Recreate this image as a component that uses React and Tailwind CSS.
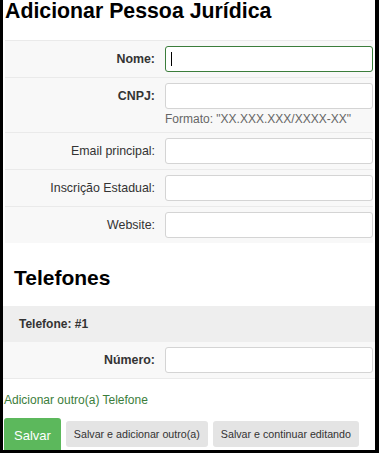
import React from 'react';

const font = { fontFamily: '"Liberation Sans", Arial, sans-serif' };

function Row({ label, required, help, focused, last }) {
  return (
    <div className={`flex items-start py-[5px] ${last ? '' : 'border-b border-[#eaeaea]'}`}>
      <div className={`w-[150px] h-[26px] flex items-center justify-end text-[12.4px] text-[#333] ${required ? 'font-bold' : ''}`}>
        {label}
      </div>
      <div className="ml-[10px] flex-1 flex flex-col">
        {focused ? (
          <div className="h-[26px] rounded-[3px] border border-[#3b7d3b] bg-white flex items-center pl-[5px]">
            <span className="w-px h-[14px] bg-black" />
            <input className="flex-1 outline-none border-0 bg-transparent text-[12px]" />
          </div>
        ) : (
          <input className="h-[26px] rounded-[3px] border border-[#d4d4d4] bg-white outline-none text-[12px] px-[5px]" />
        )}
        {help && (
          <div className="mt-[3px] leading-[14px] text-[12px] text-[#666] mb-[1px]">{help}</div>
        )}
      </div>
    </div>
  );
}

export default function App() {
  return (
    <div className="w-[379px] h-[453px] bg-black pl-[3px] pr-[4px] pb-[3px] overflow-hidden" style={font}>
      <div className="h-full bg-white overflow-hidden">
        <h1 className="h-[40px] pl-[2px] pt-[1px] text-[21.3px] leading-[20px] font-bold text-black">
          Adicionar Pessoa Jurídica
        </h1>

        <div className="ml-[2px] mr-[2px] bg-[#f8f8f8] border-t border-[#eaeaea]">
          <Row label="Nome:" required focused />
          <Row label="CNPJ:" required help={'Formato: "XX.XXX.XXX/XXXX-XX"'} />
          <Row label="Email principal:" />
          <Row label="Inscrição Estadual:" />
          <Row label="Website:" last />
        </div>

        <h2 className="mt-[25px] pl-[11px] text-[21px] leading-[20px] font-bold text-black">Telefones</h2>

        <div className="mt-[18px] mr-[-1px]">
          <div className="h-[36px] bg-[#eeeeee] flex items-center pl-[16px] text-[12px] font-bold text-[#333]">
            Telefone: #1
          </div>
          <div className="bg-[#f8f8f8] border-b border-[#eaeaea] pl-[2px] pr-[3px]">
            <Row label="Número:" required last />
          </div>
        </div>

        <div className="mt-[14px] pl-[1px] text-[12px] leading-[14px] text-[#3b7d3b]">
          Adicionar outro(a) Telefone
        </div>

        <div className="mt-[11px] pl-[1px] flex items-start gap-[5px]">
          <button className="h-[35px] px-[10px] rounded-[3px] bg-[#5cb85c] text-white text-[13px]">Salvar</button>
          <button className="mt-[3px] h-[26px] px-[8px] rounded-[3px] bg-[#e4e4e4] text-[#333] text-[10.7px]">
            Salvar e adicionar outro(a)
          </button>
          <button className="mt-[3px] h-[26px] px-[8px] rounded-[3px] bg-[#e4e4e4] text-[#333] text-[10.7px]">
            Salvar e continuar editando
          </button>
        </div>
      </div>
    </div>
  );
}
